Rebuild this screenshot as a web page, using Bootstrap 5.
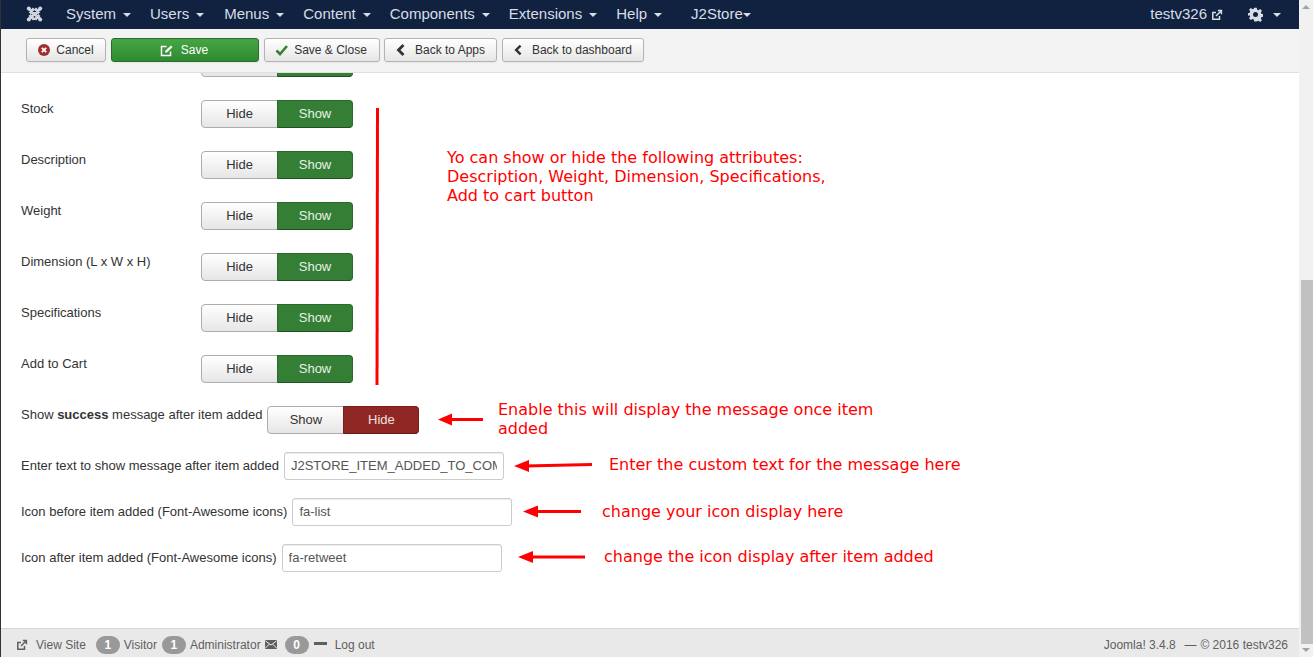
<!DOCTYPE html>
<html lang="en">
<head>
<meta charset="utf-8">
<title>J2Store</title>
<link href="https://cdn.jsdelivr.net/npm/bootstrap@5.3.0/dist/css/bootstrap.min.css" rel="stylesheet">
<style>
html,body{height:100%;overflow:hidden}
body{font-family:"Liberation Sans",Arial,sans-serif;font-size:13px;color:#333;background:#fff}
.shell{height:657px;border-left:1px solid #333}
.page{flex:1 1 auto;min-width:0}
.topbar{height:29px;background:#112240;padding:0;flex-wrap:nowrap}
.topbar a{color:#d8dde6;font-size:15px;text-decoration:none;line-height:27px;height:27px;margin-bottom:2px;white-space:nowrap}
.logo-slot{margin-left:25px;width:40px;margin-bottom:2px}
.menu-item{margin-right:19px}
.menu-users{margin-right:20px}
.menu-item::after,.gear-caret{content:"";display:inline-block;border-top:4px solid #d8dde6;border-left:4px solid transparent;border-right:4px solid transparent;margin-left:7px;vertical-align:2px}
.j2-item{margin-left:10px}
.j2-item::after{content:"";display:inline-block;border-top:4px solid #d8dde6;border-left:4px solid transparent;border-right:4px solid transparent;margin-left:0;vertical-align:2px}
.top-right{margin-right:18px}
.gear-icon{margin-left:25px}
.gear-caret{margin-left:10px;vertical-align:0}
.tool-strip{height:44px;background:#f3f3f3;border-bottom:1px solid #e0e0e0;padding:9px 0 0 25px;gap:5px}
.tool-btn{height:24px;font-size:12px;line-height:22px;padding:0 11px;color:#333;border:1px solid #b3b3b3;border-radius:3px;background:linear-gradient(#fff,#e6e6e6);box-shadow:0 1px 2px rgba(0,0,0,.05);white-space:nowrap;display:inline-flex;align-items:center;justify-content:center;gap:6px}
.tool-cancel{width:80px}
.tool-save{width:148px;color:#fff;border-color:#2a6d2a;background:linear-gradient(#46a546,#2f8a30);gap:8px;padding-right:13px}
.tool-save:hover{color:#fff}
.tool-close{width:116px;padding-right:12px;padding-left:10px;flex:none}
.tool-back{gap:10px;flex:none}
.tool-apps{width:113px;margin-left:-1px}
.tool-dash{width:142px}
.content-pane{flex:1 1 auto;min-height:0;overflow:hidden;padding-left:20px}
.clip-row{height:4px;margin-left:180px;overflow:hidden;display:flex;align-items:flex-end;margin-bottom:23px}
.form-line{display:flex;align-items:flex-start;height:28px;margin-bottom:23px}
.form-line.tight{margin-bottom:18px}
.form-label-fix{font-size:13px;color:#333;margin:0;padding-top:1px;line-height:16px;white-space:nowrap}
.label-input{padding-top:6px}
.fixed-label{width:180px;flex:none;margin-top:0}
.after-label{margin-left:5px}
.toggle .btn{width:77px;height:28px;font-size:13px;line-height:26px;padding:0;border:1px solid #adadad;color:#333;border-radius:4px;background:linear-gradient(#fff,#e6e6e6)}
.toggle .btn+.btn{width:76px}
.toggle .btn.on-green{color:#e8f1e8;background:#347f35;border-color:#2a6a2b;border-bottom-color:#1f5220}
.toggle .btn.on-red{color:#f3e0e0;background:#8f2725;border-color:#7a1f1d;border-bottom-color:#641715}
.text-field{width:220px;height:28px;font-size:13px;color:#555;padding:3px 6px 5px;border:1px solid #ccc;border-radius:3px;margin-left:5px;flex:none;box-shadow:inset 0 1px 1px rgba(0,0,0,.075)}
.note-layer{position:absolute;left:0;top:0;width:1298px;height:555px;pointer-events:none}
.note{position:absolute;color:#f00;font-family:"DejaVu Sans",sans-serif;font-size:16px;line-height:19px;white-space:nowrap}
.status-strip{height:29px;background:#e9e9e9;border-top:1px solid #d6d6d6;padding:3px 0 0 15px;color:#5f5f5f;font-size:12px}
.pill{display:inline-block;background:#999;color:#fff;border-radius:10px;width:24px;height:18px;line-height:18px;text-align:center;font-size:12px;font-weight:700;margin-right:4px;padding:0}
.foot-version{margin-right:2px}
.gutter{width:14px;flex:none;background:#f1f1f1;position:relative}
.gutter-up,.gutter-down{display:block;width:0;height:0;margin:5px auto 0;border-left:4px solid transparent;border-right:4px solid transparent}
.gutter-up{border-bottom:4px solid #a3a3a3}
.gutter-down{border-top:4px solid #a3a3a3;margin-top:4px}
.gutter-space{height:271px}
.gutter-thumb{height:364px;background:#c1c1c1;margin-left:2px}
</style>
</head>
<body>
<div class="shell d-flex">
  <div class="page d-flex flex-column">
    <nav class="topbar d-flex align-items-center">
      <div class="logo-slot d-flex">
        <svg width="17" height="18" viewBox="0 0 17 18" fill="none" stroke="#cfd5df" stroke-width="3" aria-hidden="true"><path d="M3 4 L14 14 M14 4 L3 14 M3.5 8 L8 3.5 M9 3.5 L13.5 8 M3.5 10 L8 14.5 M9 14.5 L13.5 10"/><circle cx="2.8" cy="3.4" r="2" fill="#cfd5df" stroke="none"/><circle cx="14.2" cy="3.4" r="2" fill="#cfd5df" stroke="none"/><circle cx="2.8" cy="14.6" r="2" fill="#cfd5df" stroke="none"/><circle cx="14.2" cy="14.6" r="2" fill="#cfd5df" stroke="none"/></svg>
      </div>
      <a class="menu-item" href="#">System</a>
      <a class="menu-item menu-users" href="#">Users</a>
      <a class="menu-item" href="#">Menus</a>
      <a class="menu-item" href="#">Content</a>
      <a class="menu-item" href="#">Components</a>
      <a class="menu-item" href="#">Extensions</a>
      <a class="menu-item" href="#">Help</a>
      <a class="j2-item" href="#">J2Store</a>
      <div class="ms-auto d-flex align-items-center top-right">
        <a href="#">testv326</a>
        <svg class="ms-1" width="12" height="12" viewBox="0 0 12 12" fill="none" stroke="#d8dde6" stroke-width="1.5" aria-hidden="true"><path d="M8.5 7v3.2H1.8V3.5H5"/><path d="M5 7l5-5M6.8 1.6h3.6v3.6"/></svg>
        <svg class="gear-icon" width="15" height="15" viewBox="0 0 24 24" aria-hidden="true"><path fill="#d8dde6" fill-rule="evenodd" d="M10 1h4l.7 3.2 2 .8 2.8-1.8 2.8 2.8-1.8 2.8.8 2 3.2.7v4l-3.2.7-.8 2 1.800 2.800-2.800 2.800-2.800-1.800-2 .8L14 23h-4l-.7-3.200-2-.8-2.800 1.800-2.800-2.800 1.800-2.800-.8-2L-.5 14v-4l3.200-.7.8-2-1.800-2.800 2.800-2.800 2.800 1.800 2-.8zM12 8a4 4 0 1 0 0 8 4 4 0 0 0 0-8z"/></svg>
        <span class="gear-caret"></span>
      </div>
    </nav>
    <div class="tool-strip d-flex">
      <a class="btn tool-btn tool-cancel" href="#"><svg width="12" height="12" viewBox="0 0 12 12" aria-hidden="true"><circle cx="6" cy="6" r="6" fill="#a03030"/><path d="M3.800 3.800l4.400 4.400M8.200 3.800L3.800 8.200" stroke="#fff" stroke-width="1.800"/></svg>Cancel</a>
      <a class="btn tool-btn tool-save" href="#"><svg width="13" height="13" viewBox="0 0 13 13" fill="none" stroke="#fff" stroke-width="1.500" aria-hidden="true"><path d="M10.500 7.500v4h-9v-9h5"/><path d="M5 8.500l.5-2 5.500-5 1.500 1.500-5.500 5.500z" fill="#fff" stroke="none"/></svg>Save</a>
      <a class="btn tool-btn tool-close" href="#"><svg width="13" height="12" viewBox="0 0 13 12" fill="none" stroke="#378137" stroke-width="2.600" aria-hidden="true"><path d="M1.500 6.500l3.500 3.500 7-8"/></svg>Save &amp; Close</a>
      <a class="btn tool-btn tool-back tool-apps" href="#"><svg width="9" height="12" viewBox="0 0 9 12" fill="none" stroke="#333" stroke-width="2.800" aria-hidden="true"><path d="M7.500 1L2.500 6l5 5"/></svg>Back to Apps</a>
      <a class="btn tool-btn tool-back tool-dash" href="#"><svg width="9" height="12" viewBox="0 0 9 12" fill="none" stroke="#333" stroke-width="2.800" aria-hidden="true"><path d="M7.500 1L2.500 6l5 5"/></svg>Back to dashboard</a>
    </div>
    <main class="content-pane position-relative">
      <div class="clip-row toggle"><div class="btn-group flex-none"><button class="btn" type="button" aria-label="Hide"></button><button class="btn on-green" type="button" aria-label="Show"></button></div></div>
      <div class="form-line"><label class="form-label-fix fixed-label">Stock</label><div class="btn-group toggle"><button class="btn" type="button">Hide</button><button class="btn on-green" type="button">Show</button></div></div>
      <div class="form-line"><label class="form-label-fix fixed-label">Description</label><div class="btn-group toggle"><button class="btn" type="button">Hide</button><button class="btn on-green" type="button">Show</button></div></div>
      <div class="form-line"><label class="form-label-fix fixed-label">Weight</label><div class="btn-group toggle"><button class="btn" type="button">Hide</button><button class="btn on-green" type="button">Show</button></div></div>
      <div class="form-line"><label class="form-label-fix fixed-label">Dimension (L x W x H)</label><div class="btn-group toggle"><button class="btn" type="button">Hide</button><button class="btn on-green" type="button">Show</button></div></div>
      <div class="form-line"><label class="form-label-fix fixed-label">Specifications</label><div class="btn-group toggle"><button class="btn" type="button">Hide</button><button class="btn on-green" type="button">Show</button></div></div>
      <div class="form-line"><label class="form-label-fix fixed-label">Add to Cart</label><div class="btn-group toggle"><button class="btn" type="button">Hide</button><button class="btn on-green" type="button">Show</button></div></div>
      <div class="form-line tight"><label class="form-label-fix">Show <b>success</b> message after item added</label><div class="btn-group toggle after-label"><button class="btn" type="button">Show</button><button class="btn on-red" type="button">Hide</button></div></div>
      <div class="form-line tight"><label class="form-label-fix label-input">Enter text to show message after item added</label><input class="form-control text-field" type="text" value="J2STORE_ITEM_ADDED_TO_COMPARE"></div>
      <div class="form-line tight"><label class="form-label-fix label-input">Icon before item added (Font-Awesome icons)</label><input class="form-control text-field" type="text" value="fa-list"></div>
      <div class="form-line tight"><label class="form-label-fix label-input">Icon after item added (Font-Awesome icons)</label><input class="form-control text-field" type="text" value="fa-retweet"></div>
      <div class="note-layer">
        <svg width="1298" height="555" fill="none" stroke="#f00" stroke-width="3" aria-hidden="true">
          <path d="M376.500 35L376 312"/>
          <path d="M482 346.500H448"/><path d="M437 346.500l14-6v12z" fill="#f00" stroke="none"/>
          <path d="M591 391.500L524 393"/><path d="M513 393l15-6v12z" fill="#f00" stroke="none"/>
          <path d="M580 438.500H532"/><path d="M522 438.500l15-6v12z" fill="#f00" stroke="none"/>
          <path d="M584 484H528"/><path d="M517 484l15-6v12z" fill="#f00" stroke="none"/>
        </svg>
        <div class="note" style="left:446px;top:75px">Yo can show or hide the following attributes:<br>Description, Weight, Dimension, Specifications,<br>Add to cart button</div>
        <div class="note" style="left:497px;top:327px">Enable this will display the message once item<br>added</div>
        <div class="note" style="left:608px;top:382px">Enter the custom text for the message here</div>
        <div class="note" style="left:601px;top:429px">change your icon display here</div>
        <div class="note" style="left:603px;top:474px">change the icon display after item added</div>
      </div>
    </main>
    <footer class="status-strip d-flex align-items-center">
      <svg width="12" height="12" viewBox="0 0 12 12" fill="none" stroke="#5f5f5f" stroke-width="1.500" aria-hidden="true"><path d="M8.500 7v3.200H1.800V3.500H5"/><path d="M5 7l5-5M6.800 1.600h3.600v3.600"/></svg>
      <span style="margin-left:8px;margin-right:10px">View Site</span>
      <span class="badge pill">1</span><span style="margin-right:5px">Visitor</span>
      <span class="badge pill">1</span><span style="margin-right:4px">Administrator</span>
      <svg width="12" height="9" viewBox="0 0 12 9" aria-hidden="true"><rect width="12" height="9" rx="1" fill="#5f5f5f"/><path d="M0.500 1l5.500 4 5.500-4M0.500 8l4-4M11.500 8l-4-4" stroke="#e9e9e9" fill="none"/></svg>
      <span class="badge pill" style="margin-left:8px;margin-right:5px">0</span>
      <span style="width:13px;height:3px;background:#5f5f5f;display:block;margin-bottom:3px"></span>
      <span style="margin-left:8px">Log out</span>
      <span class="ms-auto" style="margin-right:11px"><span class="foot-version">Joomla! 3.4.8</span> &nbsp;—<span class="ms-1">© 2016 testv326</span></span>
    </footer>
  </div>
  <div class="gutter d-flex flex-column">
    <span class="gutter-up"></span>
    <div class="gutter-space"></div>
    <div class="gutter-thumb"></div>
    <span class="gutter-down"></span>
  </div>
</div>
</body>
</html>
